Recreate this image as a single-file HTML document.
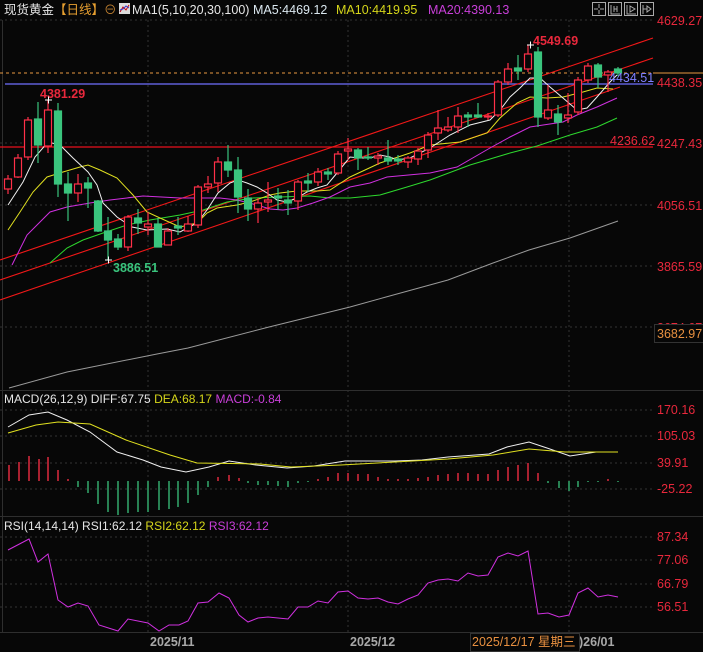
<!DOCTYPE html>
<html><head><meta charset="utf-8"><style>
html,body{margin:0;padding:0;background:#070707;width:703px;height:652px;overflow:hidden}
svg{display:block;font-family:"Liberation Sans","Noto Sans CJK SC",sans-serif}
</style></head><body>
<svg width="703" height="652" viewBox="0 0 703 652" xmlns="http://www.w3.org/2000/svg">
<rect width="703" height="652" fill="#070707"/>
<!-- grid -->
<g stroke="#333" stroke-dasharray="2,3" stroke-width="1">
<line x1="0" y1="20" x2="653" y2="20"/><line x1="0" y1="143" x2="653" y2="143"/><line x1="0" y1="205" x2="653" y2="205"/><line x1="0" y1="266" x2="653" y2="266"/><line x1="0" y1="327" x2="653" y2="327"/>
<line x1="0" y1="410" x2="653" y2="410"/><line x1="0" y1="436" x2="653" y2="436"/><line x1="0" y1="463" x2="653" y2="463"/><line x1="0" y1="489" x2="653" y2="489"/>
<line x1="0" y1="537" x2="653" y2="537"/><line x1="0" y1="560" x2="653" y2="560"/><line x1="0" y1="584" x2="653" y2="584"/><line x1="0" y1="607" x2="653" y2="607"/>
<line x1="148" y1="20" x2="148" y2="632"/><line x1="348" y1="20" x2="348" y2="632"/><line x1="569" y1="20" x2="569" y2="632"/>
</g>
<g stroke="#2e2e2e"><line x1="0" y1="390.5" x2="703" y2="390.5"/><line x1="0" y1="516.5" x2="703" y2="516.5"/><line x1="0" y1="632.5" x2="703" y2="632.5"/><line x1="2.5" y1="20" x2="2.5" y2="632"/></g>
<!-- header -->
<text x="4" y="14" font-size="12.5" fill="#e6e6e6">现货黄金<tspan fill="#e8a030">【日线】</tspan><tspan fill="#c08030">⊖</tspan></text>
<rect x="119" y="3" width="11" height="11" fill="#ddd"/><path d="M120 12 L123 7 L126 10 L129 5" stroke="#c00" fill="none"/><path d="M120 10 L123 9 L126 6 L129 8" stroke="#33c" fill="none"/>
<text x="132" y="14" font-size="12.5" fill="#e6e6e6">MA1(5,10,20,30,100)</text>
<text x="253" y="14" font-size="12.5" fill="#dbe8f0">MA5:4469.12</text>
<text x="336" y="14" font-size="12.5" fill="#d6d61a">MA10:4419.95</text>
<text x="428" y="14" font-size="12.5" fill="#c93fd9">MA20:4390.13</text>
<g stroke="#aaa" fill="none"><rect x="592.5" y="2.5" width="13" height="13"/><rect x="608.5" y="2.5" width="13" height="13"/><rect x="624.5" y="2.5" width="13" height="13"/><rect x="640.5" y="2.5" width="13" height="13"/>
<path d="M599 4v4M599 10v4M594 9h4M600 9h4M611 5v9h9M614 6v6M617 6v6M614 9h3M627 5v9h9M630 6l5 3-5 3zM643 5v9M643 9h4M647 6l4 3-4 3z"/></g>
<!-- price axis labels -->
<g font-size="12.5" fill="#e8283c">
<text x="657" y="25">4629.27</text><text x="657" y="87">4438.35</text><text x="657" y="148">4247.43</text><text x="657" y="210">4056.51</text><text x="657" y="271">3865.59</text><text x="657" y="332">3674.67</text>
</g>
<rect x="654.5" y="324.5" width="50" height="18" fill="#070707" stroke="#333"/>
<text x="657" y="338" font-size="12.5" fill="#e89040">3682.97</text>
<!-- horizontal lines -->
<line x1="0" y1="73" x2="703" y2="73" stroke="#e89a40" stroke-dasharray="3,3"/>
<line x1="653" y1="73" x2="703" y2="73" stroke="#e89a40"/>
<line x1="5" y1="84" x2="653" y2="84" stroke="#7070ff" stroke-width="1.2"/>
<line x1="0" y1="147" x2="653" y2="147" stroke="#e8101c" stroke-width="1.2"/>
<!-- channel -->
<g stroke="#f01818" stroke-width="1.1">
<line x1="0" y1="260" x2="653" y2="38"/><line x1="0" y1="280" x2="653" y2="58"/><line x1="0" y1="300" x2="620" y2="87"/>
</g>
<!-- MA100 -->
<polyline fill="none" stroke="#9a9a9a" points="9,388 67,372 157,354 188,348 269,327 350,307 386,297 448,280 493,263 529,250 570,238 618,221"/>
<!-- MA30 -->
<polyline fill="none" stroke="#2ed82e" points="50,263 67,248 83,240 103,233 127,225 150,220 180,215 203,210 227,202 253,198 280,197 310,196 330,198 350,198 380,195 407,187 430,180 470,165 510,153 537,146 570,135 597,127 617,118"/>
<!-- MA20 -->
<polyline fill="none" stroke="#d030e0" points="12,265 27,235 50,212 67,207 90,203 110,200 143,196 180,198 220,198 237,200 257,205 270,209 283,210 297,208 313,203 330,197 350,187 370,183 387,177 430,173 457,167 490,148 510,137 530,127 563,122 577,115 597,107 617,98"/>
<!-- MA10 -->
<polyline fill="none" stroke="#e0e020" points="8,230 20,212 33,192 47,177 63,172 80,167 88,165 100,170 117,178 133,195 147,212 160,218 180,227 197,223 207,213 217,208 237,205 250,202 270,195 280,193 297,191 317,191 330,190 350,177 380,163 410,153 430,145 460,142 487,133 500,118 517,103 530,97 547,98 563,97 583,92 597,88 613,89"/>
<!-- MA5 -->
<polyline fill="none" stroke="#f0f0f0" points="8,205 23,182 35,157 48,142 60,145 73,158 88,172 97,185 103,203 117,217 132,227 147,230 167,229 180,232 197,223 207,210 218,193 230,183 238,180 247,183 257,187 267,193 277,200 287,202 297,198 307,192 317,188 327,185 337,173 350,157 360,158 370,158 380,155 390,157 397,160 410,158 430,148 450,135 470,125 490,120 500,110 510,97 520,88 530,78 540,78 550,87 563,98 577,110 587,108 597,97 610,82 617,75"/>
<!-- candles -->
<g id="c" stroke-width="1.2">
<g stroke="#ff3048" fill="#070707">
<line x1="8" y1="175" x2="8" y2="194"/><rect x="4.5" y="179" width="7" height="10"/>
<line x1="18" y1="154" x2="18" y2="178"/><rect x="14.5" y="158" width="7" height="19"/>
<line x1="28" y1="117" x2="28" y2="160"/><rect x="24.5" y="120" width="7" height="37"/>
<line x1="48" y1="100" x2="48" y2="153"/><rect x="44.5" y="110" width="7" height="36"/>
<line x1="78" y1="174" x2="78" y2="202"/><rect x="74.5" y="184" width="7" height="9"/>
<line x1="128" y1="215" x2="128" y2="251"/><rect x="124.5" y="217" width="7" height="30"/>
<line x1="148" y1="212" x2="148" y2="235"/><rect x="144.5" y="224" width="7" height="3"/>
<line x1="168" y1="228" x2="168" y2="245"/><rect x="164.5" y="231" width="7" height="14"/>
<line x1="188" y1="216" x2="188" y2="232"/><rect x="184.5" y="224" width="7" height="7"/>
<line x1="198" y1="185" x2="198" y2="228"/><rect x="194.5" y="187" width="7" height="38"/>
<line x1="208" y1="176" x2="208" y2="193"/><rect x="204.5" y="184" width="7" height="3"/>
<line x1="218" y1="157" x2="218" y2="192"/><rect x="214.5" y="162" width="7" height="21"/>
<line x1="258" y1="198" x2="258" y2="223"/><rect x="254.5" y="203" width="7" height="6"/>
<line x1="268" y1="182" x2="268" y2="212"/><rect x="264.5" y="200" width="7" height="2"/>
<line x1="298" y1="180" x2="298" y2="210"/><rect x="294.5" y="182" width="7" height="19"/>
<line x1="318" y1="168" x2="318" y2="186"/><rect x="314.5" y="172" width="7" height="10"/>
<line x1="338" y1="151" x2="338" y2="175"/><rect x="334.5" y="154" width="7" height="19"/>
<line x1="348" y1="138" x2="348" y2="160"/><rect x="344.5" y="149" width="7" height="2"/>
<line x1="378" y1="153" x2="378" y2="165"/><rect x="374.5" y="156" width="7" height="2"/>
<line x1="408" y1="156" x2="408" y2="168"/><rect x="404.5" y="158" width="7" height="4"/>
<line x1="418" y1="148" x2="418" y2="165"/><rect x="414.5" y="151" width="7" height="8"/>
<line x1="428" y1="132" x2="428" y2="158"/><rect x="424.5" y="135" width="7" height="15"/>
<line x1="438" y1="110" x2="438" y2="140"/><rect x="434.5" y="128" width="7" height="5"/>
<line x1="448" y1="117" x2="448" y2="132"/><rect x="444.5" y="127" width="7" height="3"/>
<line x1="458" y1="107" x2="458" y2="133"/><rect x="454.5" y="116" width="7" height="11"/>
<line x1="488" y1="113" x2="488" y2="120"/><rect x="484.5" y="116" width="7" height="1"/>
<line x1="498" y1="80" x2="498" y2="117"/><rect x="494.5" y="82" width="7" height="33"/>
<line x1="508" y1="63" x2="508" y2="85"/><rect x="504.5" y="69" width="7" height="13"/>
<line x1="528" y1="45" x2="528" y2="72"/><rect x="524.5" y="54" width="7" height="15"/>
<line x1="548" y1="85" x2="548" y2="120"/><rect x="544.5" y="110" width="7" height="8"/>
<line x1="568" y1="93" x2="568" y2="123"/><rect x="564.5" y="115" width="7" height="3"/>
<line x1="578" y1="77" x2="578" y2="115"/><rect x="574.5" y="80" width="7" height="32"/>
<line x1="588" y1="63" x2="588" y2="83"/><rect x="584.5" y="66" width="7" height="14"/>
<line x1="608" y1="70" x2="608" y2="92"/><rect x="604.5" y="72" width="7" height="3"/>
</g>
<g stroke="#3ac47d" fill="#3ac47d">
<line x1="38" y1="102" x2="38" y2="163"/><rect x="34.5" y="119" width="7" height="26"/>
<line x1="58" y1="103" x2="58" y2="197"/><rect x="54.5" y="111" width="7" height="73"/>
<line x1="68" y1="172" x2="68" y2="221"/><rect x="64.5" y="184" width="7" height="9"/>
<line x1="88" y1="177" x2="88" y2="208"/><rect x="84.5" y="183" width="7" height="5"/>
<line x1="98" y1="200" x2="98" y2="232"/><rect x="94.5" y="201" width="7" height="30"/>
<line x1="108" y1="217" x2="108" y2="260"/><rect x="104.5" y="231" width="7" height="9"/>
<line x1="118" y1="234" x2="118" y2="250"/><rect x="114.5" y="239" width="7" height="8"/>
<line x1="138" y1="209" x2="138" y2="234"/><rect x="134.5" y="218" width="7" height="5"/>
<line x1="158" y1="218" x2="158" y2="247"/><rect x="154.5" y="224" width="7" height="23"/>
<line x1="178" y1="217" x2="178" y2="235"/><rect x="174.5" y="226" width="7" height="2"/>
<line x1="228" y1="145" x2="228" y2="177"/><rect x="224.5" y="162" width="7" height="8"/>
<line x1="238" y1="157" x2="238" y2="213"/><rect x="234.5" y="170" width="7" height="27"/>
<line x1="248" y1="189" x2="248" y2="221"/><rect x="244.5" y="198" width="7" height="11"/>
<line x1="278" y1="188" x2="278" y2="210"/><rect x="274.5" y="196" width="7" height="2"/>
<line x1="288" y1="190" x2="288" y2="215"/><rect x="284.5" y="200" width="7" height="3"/>
<line x1="308" y1="173" x2="308" y2="192"/><rect x="304.5" y="181" width="7" height="2"/>
<line x1="328" y1="168" x2="328" y2="180"/><rect x="324.5" y="172" width="7" height="2"/>
<line x1="358" y1="148" x2="358" y2="170"/><rect x="354.5" y="150" width="7" height="8"/>
<line x1="368" y1="147" x2="368" y2="160"/><rect x="364.5" y="157" width="7" height="1"/>
<line x1="388" y1="140" x2="388" y2="165"/><rect x="384.5" y="158" width="7" height="3"/>
<line x1="398" y1="155" x2="398" y2="165"/><rect x="394.5" y="159" width="7" height="2"/>
<line x1="468" y1="112" x2="468" y2="127"/><rect x="464.5" y="115" width="7" height="2"/>
<line x1="478" y1="103" x2="478" y2="118"/><rect x="474.5" y="115" width="7" height="2"/>
<line x1="518" y1="55" x2="518" y2="80"/><rect x="514.5" y="68" width="7" height="3"/>
<line x1="538" y1="47" x2="538" y2="127"/><rect x="534.5" y="52" width="7" height="65"/>
<line x1="558" y1="105" x2="558" y2="135"/><rect x="554.5" y="114" width="7" height="8"/>
<line x1="598" y1="63" x2="598" y2="88"/><rect x="594.5" y="65" width="7" height="12"/>
<line x1="618" y1="67" x2="618" y2="76"/><rect x="614.5" y="69" width="7" height="4"/>
</g>
</g>
<!-- annotations -->
<text x="533" y="45" font-size="12.5" font-weight="bold" fill="#e8283c">4549.69</text>
<path d="M527 45h7M530.5 41.5v7" stroke="#fff"/>
<text x="40" y="98" font-size="12.5" font-weight="bold" fill="#e8283c">4381.29</text>
<path d="M45 100h7M48.5 96.5v7" stroke="#fff"/>
<text x="113" y="272" font-size="12.5" font-weight="bold" fill="#3ac47d">3886.51</text>
<path d="M105 260h7M108.5 256.5v7" stroke="#fff"/>
<text x="609" y="82" font-size="12.5" fill="#8080ff">4434.51</text>
<text x="610" y="145" font-size="12.5" fill="#e8283c">4236.62</text>
<!-- MACD -->
<text x="4" y="403" font-size="12" fill="#e6e6e6">MACD(26,12,9) DIFF:67.75 <tspan fill="#d6d61a">DEA:68.17</tspan> <tspan fill="#c93fd9">MACD:-0.84</tspan></text>
<g font-size="12.5" fill="#e8283c"><text x="657" y="414">170.16</text><text x="657" y="440">105.03</text><text x="657" y="467">39.91</text><text x="657" y="493">-25.22</text></g>
<g stroke="#ff3048" stroke-width="1.3">
<line x1="9" y1="481" x2="9" y2="465"/><line x1="19" y1="481" x2="19" y2="462"/><line x1="29" y1="481" x2="29" y2="456"/><line x1="39" y1="481" x2="39" y2="459"/><line x1="48" y1="481" x2="48" y2="457"/><line x1="58" y1="481" x2="58" y2="470"/><line x1="68" y1="481" x2="68" y2="479"/>
<line x1="218" y1="481" x2="218" y2="477"/><line x1="229" y1="481" x2="229" y2="475"/><line x1="239" y1="481" x2="239" y2="478"/>
<line x1="318" y1="481" x2="318" y2="479"/><line x1="328" y1="481" x2="328" y2="477"/><line x1="338" y1="481" x2="338" y2="473"/><line x1="348" y1="481" x2="348" y2="473"/><line x1="358" y1="481" x2="358" y2="474"/><line x1="368" y1="481" x2="368" y2="474"/><line x1="378" y1="481" x2="378" y2="477"/><line x1="388" y1="481" x2="388" y2="479"/><line x1="398" y1="481" x2="398" y2="479"/><line x1="408" y1="481" x2="408" y2="479"/><line x1="418" y1="481" x2="418" y2="478"/><line x1="428" y1="481" x2="428" y2="477"/><line x1="438" y1="481" x2="438" y2="475"/><line x1="448" y1="481" x2="448" y2="474"/><line x1="458" y1="481" x2="458" y2="473"/><line x1="468" y1="481" x2="468" y2="473"/><line x1="478" y1="481" x2="478" y2="474"/><line x1="488" y1="481" x2="488" y2="474"/><line x1="498" y1="481" x2="498" y2="470"/><line x1="508" y1="481" x2="508" y2="467"/><line x1="518" y1="481" x2="518" y2="465"/><line x1="528" y1="481" x2="528" y2="463"/><line x1="538" y1="481" x2="538" y2="473"/><line x1="608" y1="481" x2="608" y2="479"/>
</g>
<g stroke="#3ac47d" stroke-width="1.3">
<line x1="78" y1="481" x2="78" y2="487"/><line x1="88" y1="481" x2="88" y2="493"/><line x1="98" y1="481" x2="98" y2="504"/><line x1="108" y1="481" x2="108" y2="512"/><line x1="118" y1="481" x2="118" y2="515"/><line x1="128" y1="481" x2="128" y2="513"/><line x1="138" y1="481" x2="138" y2="512"/><line x1="148" y1="481" x2="148" y2="512"/><line x1="159" y1="481" x2="159" y2="510"/><line x1="169" y1="481" x2="169" y2="509"/><line x1="178" y1="481" x2="178" y2="507"/><line x1="188" y1="481" x2="188" y2="503"/><line x1="198" y1="481" x2="198" y2="495"/><line x1="208" y1="481" x2="208" y2="487"/>
<line x1="248" y1="481" x2="248" y2="483"/><line x1="258" y1="481" x2="258" y2="485"/><line x1="268" y1="481" x2="268" y2="485"/><line x1="278" y1="481" x2="278" y2="486"/><line x1="288" y1="481" x2="288" y2="487"/><line x1="298" y1="481" x2="298" y2="483"/><line x1="308" y1="481" x2="308" y2="482"/>
<line x1="548" y1="481" x2="548" y2="483"/><line x1="559" y1="481" x2="559" y2="488"/><line x1="569" y1="481" x2="569" y2="491"/><line x1="578" y1="481" x2="578" y2="487"/><line x1="588" y1="481" x2="588" y2="482"/><line x1="598" y1="481" x2="598" y2="482"/><line x1="618" y1="481" x2="618" y2="482"/>
</g>
<polyline fill="none" stroke="#f0f0f0" points="8,427 29,415 48,412 67,420 90,432 117,452 143,460 161,467 186,472 209,467 229,461 256,465 287,468 314,466 345,461 395,461 422,460 448,457 489,454 507,447 529,442 547,448 570,456 596,452 618,452"/>
<polyline fill="none" stroke="#e0e020" points="8,433 36,425 58,422 90,424 126,440 170,455 197,463 260,464 291,467 341,465 395,462 448,459 493,455 529,449 565,452 618,452"/>
<!-- RSI -->
<text x="4" y="530" font-size="12" fill="#e6e6e6">RSI(14,14,14) RSI1:62.12 <tspan fill="#d6d61a">RSI2:62.12</tspan> <tspan fill="#c93fd9">RSI3:62.12</tspan></text>
<g font-size="12.5" fill="#e8283c"><text x="657" y="541">87.34</text><text x="657" y="564">77.06</text><text x="657" y="588">66.79</text><text x="657" y="611">56.51</text></g>
<polyline fill="none" stroke="#d030e0" points="8,550 29,539 38,562 48,554 58,600 68,607 78,603 88,606 99,625 118,631 128,619 148,623 159,631 169,625 179,625 188,621 198,603 208,602 219,593 229,598 239,615 248,622 258,618 268,617 288,619 298,607 308,607 318,601 328,603 338,592 348,591 358,598 368,599 378,598 388,602 398,604 408,599 418,595 428,583 438,580 448,579 458,581 468,573 478,576 488,575 498,557 508,553 518,556 528,551 538,614 548,613 559,617 569,615 578,593 588,588 598,597 608,595 618,597"/>
<!-- date axis -->
<g font-size="12.5" font-weight="bold" fill="#a8a8a8"><text x="150" y="646">2025/11</text><text x="350" y="646">2025/12</text><text x="579" y="646">)26/01</text></g>
<rect x="470.5" y="633.5" width="109" height="18" fill="#070707" stroke="#333"/>
<text x="472" y="646" font-size="12.5" fill="#e89040">2025/12/17 星期三</text>
</svg>
</body></html>
